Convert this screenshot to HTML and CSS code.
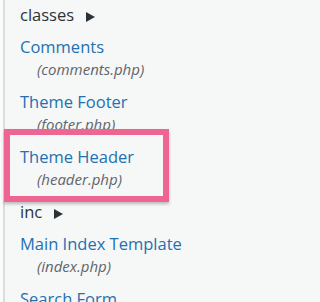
FILE: index.html
```html
<!DOCTYPE html>
<html lang="en">
<head>
<meta charset="utf-8">
<title>Theme Files</title>
<link rel="stylesheet" href="styles.css">
</head>
<body>
<div class="tree">
  <div class="dir">classes<span class="tri"></span></div>
  <div class="file"><a class="name" href="#">Comments</a><div class="path">(comments.php)</div></div>
  <div class="file"><a class="name" href="#">Theme Footer</a><div class="path">(footer.php)</div></div>
  <div class="file highlight"><a class="name" href="#">Theme Header</a><div class="path">(header.php)</div></div>
  <div class="dir">inc<span class="tri"></span></div>
  <div class="file"><a class="name" href="#">Main Index Template</a><div class="path">(index.php)</div></div>
  <div class="file"><a class="name" href="#">Search Form</a><div class="path">(searchform.php)</div></div>
</div>
</body>
</html>
```
FILE: styles.css
```css
html, body {
  margin: 0;
  padding: 0;
  height: 100%;
  overflow: hidden;
  background: #fbfbfb;
}
.tree {
  margin-left: 3px;
  border-left: 2px solid #dcdcde;
  padding: 1px 0 0 15px;
  min-height: 100%;
  background: #f6f7f7;
  font-family: "Open Sans", "Liberation Sans", sans-serif;
}
.dir {
  margin-top: 3px;
  margin-bottom: 10px;
  font-size: 16.5px;
  line-height: 22px;
  color: #2c3338;
}
.tri {
  display: inline-block;
  width: 0;
  height: 0;
  margin-left: 12px;
  border-left: 9px solid #2c3338;
  border-top: 5px solid transparent;
  border-bottom: 5px solid transparent;
  vertical-align: -1px;
}
.file {
  position: relative;
  margin-bottom: 11px;
}
.name {
  display: block;
  font-size: 16.5px;
  line-height: 22px;
  color: #2271b1;
  text-decoration: none;
}
.path {
  padding-left: 17px;
  font-size: 15px;
  font-style: italic;
  line-height: 22px;
  color: #5f656b;
}
.highlight::before {
  content: "";
  position: absolute;
  left: -16px;
  top: -17px;
  width: 165px;
  height: 73px;
  box-sizing: border-box;
  border: 6px solid #ef6591;
  box-shadow: 0 2px 3px rgba(0, 0, 0, 0.25);
}
```
